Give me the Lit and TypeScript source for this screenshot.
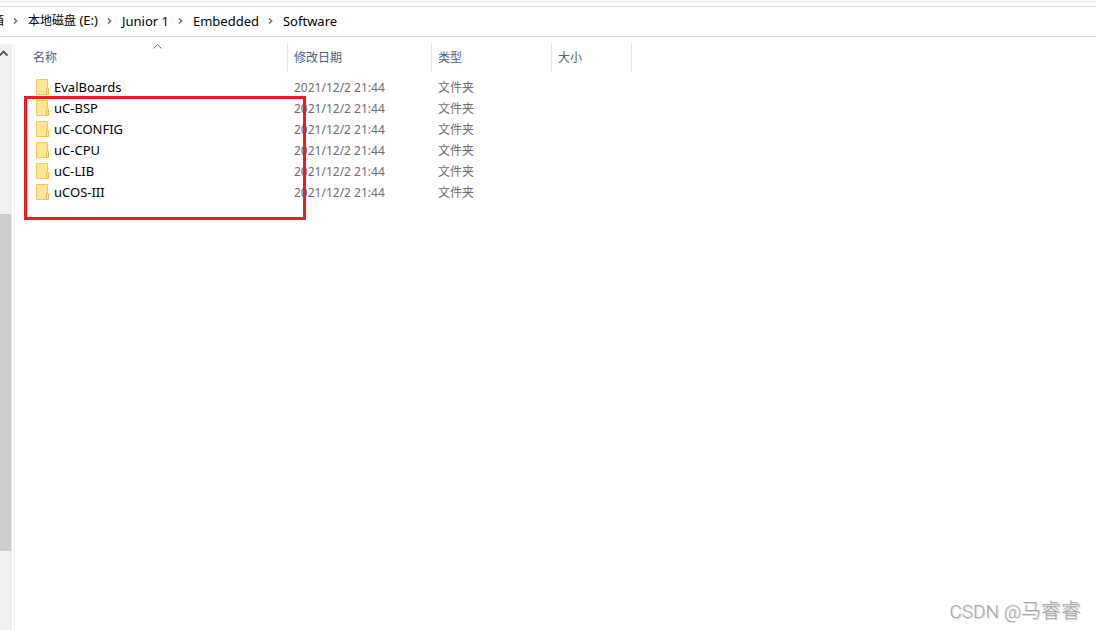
import { LitElement, html, css, svg } from "lit";
import { customElement, property } from "lit/decorators.js";

const FONT = css`"Noto Sans", "Noto Sans CJK SC", sans-serif`;

interface Crumb {
  han?: string;
  latin: string;
}

@customElement("path-bar")
class PathBar extends LitElement {
  @property({ attribute: false }) parts: Crumb[] = [];

  static styles = css`
    :host {
      display: block;
      border-top: 1px solid #e8e8e8;
      border-bottom: 1px solid #d9d9d9;
      background: #fff;
    }
    .trail {
      display: flex;
      align-items: center;
      box-sizing: border-box;
      height: 30px;
      margin: 4px 0 0;
      padding: 0 0 2px;
      border-top: 1px solid #d9d9d9;
      list-style: none;
      font: 13px/20px ${FONT};
    }
    .crumb {
      display: flex;
      align-items: center;
      white-space: nowrap;
    }
    .crumb a {
      color: #000;
      text-decoration: none;
    }
    .han {
      font-size: 12px;
    }
    .cut {
      width: 4px;
      justify-content: flex-end;
      overflow: hidden;
    }
    .sep {
      display: block;
      width: 24px;
      height: 9px;
    }
  `;

  render() {
    return html`<nav aria-label="路径">
      <ol class="trail">
        <li class="crumb cut"><a class="han" href="#">箱</a></li>
        ${this.parts.map(
          (p) => html`<li class="crumb">
            <svg class="sep" viewBox="0 0 24 9" aria-hidden="true">
              <path d="M10 2.5 L12.6 5 L10 7.5" fill="none" stroke="#707070" stroke-width="1.6" />
            </svg>
            <a href="#">${p.han ? html`<span class="han">${p.han}</span> ` : ""}${p.latin}</a>
          </li>`
        )}
      </ol>
    </nav>`;
  }
}

interface Entry {
  name: string;
  date: string;
  kind: string;
}

@customElement("file-list")
class FileList extends LitElement {
  @property({ attribute: false }) entries: Entry[] = [];

  static styles = css`
    :host {
      display: block;
      position: relative;
      font: 12px/20px ${FONT};
    }
    table {
      border-collapse: separate;
      border-spacing: 0;
      table-layout: fixed;
      width: 617px;
    }
    .name { width: 273px; }
    .date { width: 144px; }
    .kind { width: 120px; }
    .size { width: 80px; }
    th {
      padding: 6px 0;
      font-weight: normal;
      text-align: left;
    }
    th button {
      display: grid;
      grid-template-rows: 6px 18px;
      box-sizing: border-box;
      width: 100%;
      height: 28px;
      padding: 0 6px;
      border: 0;
      border-right: 1px solid #e5e5e5;
      background: none;
      color: #4c607a;
      font: inherit;
      line-height: 18px;
      text-align: left;
    }
    th span {
      grid-row: 2;
    }
    .sorted button {
      padding-left: 18px;
    }
    .caret {
      display: block;
      width: 9px;
      height: 6px;
      margin-left: 120px;
    }
    td {
      height: 21px;
      padding: 0 6px;
      line-height: 21px;
      color: #6d6d6d;
      white-space: nowrap;
    }
    .file {
      display: flex;
      align-items: center;
      gap: 4px;
      padding-left: 21px;
      color: #000;
      font-size: 13px;
    }
    .folder {
      width: 14px;
      height: 17px;
    }
    .mark {
      position: absolute;
      top: 59px;
      left: 9px;
      box-sizing: border-box;
      width: 282px;
      height: 124px;
      border: 3px solid #ed1c24;
      pointer-events: none;
    }
  `;

  private folder = () => svg`<svg class="folder" viewBox="0 0 14 17" aria-hidden="true">
    <path d="M.5 .5h11v9h-1v6h-10z" fill="#ffe793" stroke="#ecc95f" />
    <path d="M10.5 15.5v-5l1-1h1v6z" fill="#ffe793" stroke="#e6be48" />
  </svg>`;

  render() {
    return html`<table>
        <thead>
          <tr>
            <th class="name sorted" aria-sort="ascending">
              <button type="button">
                <svg class="caret" viewBox="0 0 9 6" aria-hidden="true">
                  <path d="M.5 5.5 L4.5 1.6 L8.5 5.5" fill="none" stroke="#6d6d6d" />
                </svg>
                <span>名称</span>
              </button>
            </th>
            <th class="date"><button type="button"><span>修改日期</span></button></th>
            <th class="kind"><button type="button"><span>类型</span></button></th>
            <th class="size"><button type="button"><span>大小</span></button></th>
          </tr>
        </thead>
        <tbody>
          ${this.entries.map(
            (e) => html`<tr>
              <td class="file">${this.folder()}<span>${e.name}</span></td>
              <td>${e.date}</td>
              <td>${e.kind}</td>
              <td></td>
            </tr>`
          )}
        </tbody>
      </table>
      <div class="mark"></div>`;
  }
}

@customElement("app-root")
class AppRoot extends LitElement {
  static styles = css`
    :host {
      display: flex;
      flex-direction: column;
      position: relative;
      box-sizing: border-box;
      min-height: 100vh;
      padding-top: 1px;
      overflow: hidden;
      background: #fff;
    }
    .body {
      display: flex;
      flex: 1;
    }
    .scroll {
      display: flex;
      flex-direction: column;
      width: 12px;
      margin: 7px 2px 0 0;
      background: #f0f0f0;
    }
    .up {
      display: block;
      width: 12px;
      height: 170px;
      padding: 0;
      border: 0;
      background: none;
    }
    .up svg {
      display: block;
      width: 8px;
      height: 170px;
    }
    .thumb {
      width: 11px;
      height: 337px;
      background: #cdcdcd;
    }
    .rule {
      width: 1px;
      margin-top: 7px;
      background: #f0f0f0;
    }
    file-list {
      flex: 1;
      min-width: 0;
    }
    .credit {
      position: absolute;
      right: 15px;
      bottom: 6px;
      color: #a4a4a4;
      font: 19px/24px Roboto, "Noto Sans CJK SC", sans-serif;
      font-weight: 300;
      text-shadow: 1px 1px 0 #dcdcdc;
    }
    .author {
      font-size: 20px;
    }
  `;

  private parts: Crumb[] = [
    { han: "本地磁盘", latin: "(E:)" },
    { latin: "Junior 1" },
    { latin: "Embedded" },
    { latin: "Software" },
  ];

  private entries: Entry[] = ["EvalBoards", "uC-BSP", "uC-CONFIG", "uC-CPU", "uC-LIB", "uCOS-III"].map(
    (name) => ({ name, date: "2021/12/2 21:44", kind: "文件夹" })
  );

  render() {
    return html`<path-bar .parts=${this.parts}></path-bar>
      <div class="body">
        <div class="scroll">
          <button class="up" type="button" aria-label="向上滚动">
            <svg viewBox="0 0 8 170" aria-hidden="true">
              <path d="M-.5 11.5 L3.5 7.5 L7.5 11.5" fill="none" stroke="#505050" stroke-width="1.8" />
            </svg>
          </button>
          <div class="thumb"></div>
        </div>
        <div class="rule"></div>
        <file-list .entries=${this.entries}></file-list>
      </div>
      <div class="credit">CSDN @<span class="author">马睿睿</span></div>`;
  }
}
